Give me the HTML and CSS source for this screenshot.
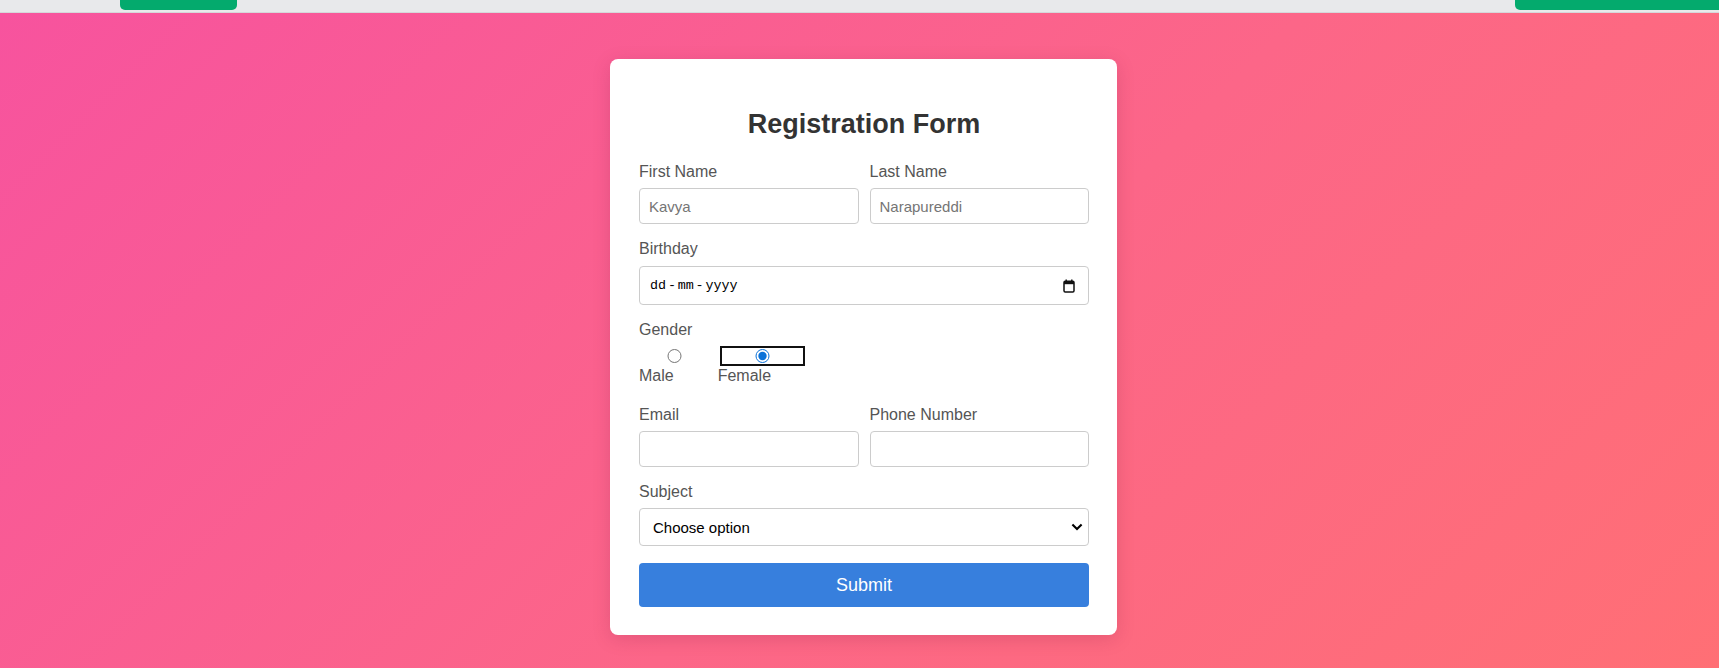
FILE: index.html
```html
<!DOCTYPE html>
<html lang="en">
<head>
<meta charset="utf-8">
<title>Registration Form</title>
<link rel="stylesheet" href="styles.css">
</head>
<body>
<div class="topbar">
  <span class="tab tab-left"></span>
  <span class="tab tab-right"></span>
</div>
<main class="page">
  <form class="card">
    <h2 class="title">Registration Form</h2>

    <div class="row">
      <div class="field">
        <label class="label" for="first">First Name</label>
        <input class="input" id="first" type="text" placeholder="Kavya">
      </div>
      <div class="field">
        <label class="label" for="last">Last Name</label>
        <input class="input" id="last" type="text" placeholder="Narapureddi">
      </div>
    </div>

    <div class="field">
      <label class="label" for="bday">Birthday</label>
      <div class="date-input" id="bday">
        <span class="date-text">dd<span class="date-sep">-</span>mm<span class="date-sep">-</span>yyyy</span>
        <svg class="cal-icon" width="12" height="14" viewBox="0 0 12 14" aria-hidden="true">
          <path d="M3.2 0.5v2.5M8.8 0.5v2.5" stroke="#111" stroke-width="1.4" fill="none"/>
          <rect x="1" y="2.2" width="10" height="10.8" rx="1.2" fill="none" stroke="#111" stroke-width="1.5"/>
          <rect x="1" y="2.2" width="10" height="3" fill="#111"/>
        </svg>
      </div>
    </div>

    <div class="field field-gender">
      <span class="label">Gender</span>
      <div class="gender-options">
        <label class="option">
          <input class="radio" type="radio" name="gender" value="male">
          <span class="option-text">Male</span>
        </label>
        <label class="option">
          <input class="radio radio-focus" type="radio" name="gender" value="female" checked>
          <span class="option-text">Female</span>
        </label>
      </div>
    </div>

    <div class="row">
      <div class="field">
        <label class="label" for="email">Email</label>
        <input class="input" id="email" type="email">
      </div>
      <div class="field">
        <label class="label" for="phone">Phone Number</label>
        <input class="input" id="phone" type="tel">
      </div>
    </div>

    <div class="field">
      <label class="label" for="subject">Subject</label>
      <div class="select-wrap">
        <select class="select" id="subject">
          <option>Choose option</option>
          <option>Subject 1</option>
          <option>Subject 2</option>
          <option>Subject 3</option>
        </select>
        <svg class="chevron" width="12" height="8" viewBox="0 0 12 8" aria-hidden="true">
          <path d="M1.4 1.4L6 6L10.6 1.4" stroke="#000" stroke-width="2.1" fill="none"/>
        </svg>
      </div>
    </div>

    <button class="submit" type="button">Submit</button>
  </form>
</main>
</body>
</html>
```

FILE: styles.css
```css
* {
  box-sizing: border-box;
}

html, body {
  margin: 0;
  padding: 0;
}

body {
  width: 1719px;
  height: 668px;
  overflow: hidden;
  font-family: "Liberation Sans", Arial, sans-serif;
  background: #e8e9eb;
}

.topbar {
  height: 13px;
  background: #e8e9eb;
  border-bottom: 1px solid #d6d7da;
  display: flex;
  align-items: flex-start;
}

.tab {
  display: block;
  height: 10px;
  background: #04aa6d;
}

.tab-left {
  margin-left: 120px;
  width: 117px;
  border-radius: 0 0 5px 5px;
}

.tab-right {
  margin-left: auto;
  width: 204px;
  border-radius: 0 0 0 5px;
}

.page {
  height: 655px;
  background: linear-gradient(135deg, #f7539e 0%, #fc6688 55%, #ff6f75 100%);
  display: flex;
  justify-content: center;
  align-items: flex-start;
  padding-top: 46px;
  padding-left: 8px;
}

.card {
  width: 507px;
  background: #ffffff;
  border-radius: 8px;
  box-shadow: 0 4px 18px rgba(120, 20, 60, 0.18);
  padding: 50px 28px 28px 29px;
  display: flex;
  flex-direction: column;
  gap: 16px;
  margin: 0;
}

.title {
  margin: 0 0 7px;
  font-size: 27px;
  font-weight: bold;
  line-height: 31px;
  color: #333333;
  text-align: center;
}

.row {
  display: grid;
  grid-template-columns: 1fr 1fr;
  column-gap: 11px;
}

.field {
  display: flex;
  flex-direction: column;
  min-width: 0;
}

.label {
  display: block;
  font-size: 16px;
  line-height: 18.4px;
  color: #555555;
  margin-bottom: 7px;
}

.input {
  width: 100%;
  height: 36px;
  border: 1px solid #cccccc;
  border-radius: 4px;
  padding: 0 9px;
  font-family: "Liberation Sans", Arial, sans-serif;
  font-size: 15px;
  color: #333333;
  background: #ffffff;
  outline: none;
}

.input::placeholder {
  color: #757575;
}

.date-input {
  height: 39px;
  border: 1px solid #cccccc;
  border-radius: 4px;
  padding: 0 13px 0 10px;
  display: flex;
  align-items: center;
  justify-content: space-between;
  background: #ffffff;
}

.date-text {
  font-family: "Liberation Mono", "DejaVu Sans Mono", monospace;
  font-size: 13.4px;
  color: #000000;
  padding-top: 1px;
}

.date-sep {
  margin: 0 1.8px;
}

.cal-icon {
  display: block;
  margin-top: 2px;
}

.field-gender {
  margin-bottom: 4px;
}

.gender-options {
  display: flex;
  gap: 10px;
}

.option {
  display: flex;
  flex-direction: column;
  align-items: flex-start;
  font-size: 16px;
  line-height: 18.4px;
  color: #555555;
}

.radio {
  width: calc(100% - 8px);
  height: 14px;
  margin: 3px 3px 4px 5px;
  accent-color: #0b72d8;
}

.radio-focus {
  outline: 2px solid #111111;
  outline-offset: 1px;
  border-radius: 2px;
}

.option-text {
  padding-right: 34px;
}

.select-wrap {
  position: relative;
}

.select {
  width: 100%;
  height: 38px;
  appearance: none;
  -webkit-appearance: none;
  border: 1px solid #cccccc;
  border-radius: 4px;
  padding: 0 30px 0 13px;
  font-family: "Liberation Sans", Arial, sans-serif;
  font-size: 15px;
  color: #000000;
  background: #ffffff;
}

.chevron {
  position: absolute;
  right: 6px;
  top: 15px;
  pointer-events: none;
}

.submit {
  height: 44px;
  width: 100%;
  border: none;
  border-radius: 4px;
  background: #377fdd;
  color: #ffffff;
  font-family: "Liberation Sans", Arial, sans-serif;
  font-size: 18px;
  cursor: pointer;
  margin-top: 1px;
}
```
